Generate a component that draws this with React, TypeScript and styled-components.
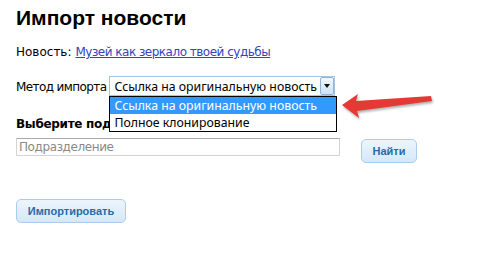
import React from 'react';
import styled, { createGlobalStyle } from 'styled-components';

const GlobalStyle = createGlobalStyle`
  html, body {
    margin: 0;
    padding: 0;
    background: #fff;
  }
  body {
    font-family: 'DejaVu Sans', Verdana, sans-serif;
    font-size: 12px;
    color: #000;
  }
`;

const Page = styled.div`
  position: relative;
  padding: 5px 16px 0;
  width: 478px;
  height: 265px;
  box-sizing: border-box;
  overflow: hidden;
`;

const Title = styled.h1`
  margin: 0;
  font-family: 'Liberation Sans', Arial, sans-serif;
  font-size: 21px;
  font-weight: bold;
  line-height: 25px;
`;

const Line = styled.div`
  margin-top: 15px;
  line-height: 14px;
`;

const NewsLink = styled.a`
  color: #3344bb;
  text-decoration: underline;
  margin-left: 4px;
  letter-spacing: -0.5px;
`;

const MethodRow = styled.div`
  display: flex;
  align-items: flex-start;
  margin-top: 18px;
`;

const Label = styled.span`
  line-height: 14px;
  margin-top: 3px;
  margin-right: 3px;
  letter-spacing: -0.6px;
`;

const SelectWrap = styled.div`
  position: relative;
  width: 226px;
`;

const SelectBox = styled.div`
  display: flex;
  align-items: center;
  height: 20px;
  margin-top: -1px;
  border: 1px solid #a6c3e0;
  box-sizing: border-box;
  padding-left: 4px;
  font-family: 'Noto Sans', 'Open Sans', sans-serif;
  font-size: 12.3px;
  background: #fff;
`;

const SelectText = styled.span`
  flex: 1;
  white-space: nowrap;
  overflow: hidden;
`;

const SelectButton = styled.span`
  width: 14px;
  height: 18px;
  box-sizing: border-box;
  border: 1px solid #8fb3d9;
  border-radius: 2px;
  background: linear-gradient(#f2f8fd, #cfe3f5);
  display: flex;
  align-items: center;
  justify-content: center;

  &::after {
    content: '';
    border-left: 3.5px solid transparent;
    border-right: 3.5px solid transparent;
    border-top: 4px solid #111;
  }
`;

const OptionList = styled.div`
  position: absolute;
  top: 19px;
  left: 0;
  width: 228px;
  border: 1px solid #000;
  box-sizing: border-box;
  background: #fff;
  font-family: 'Noto Sans', 'Open Sans', sans-serif;
  font-size: 12.3px;
  z-index: 2;
`;

const Option = styled.div<{ $active?: boolean }>`
  height: 17px;
  line-height: 17px;
  padding-left: 4px;
  white-space: nowrap;
  background: ${(p) => (p.$active ? '#3399ff' : '#fff')};
  color: ${(p) => (p.$active ? '#fff' : '#000')};
`;

const SectionTitle = styled.div`
  margin-top: 21px;
  font-weight: bold;
  line-height: 14px;
  white-space: nowrap;
  letter-spacing: -0.3px;
`;

const SearchRow = styled.div`
  display: flex;
  align-items: flex-start;
  gap: 21px;
  margin-top: 7px;
`;

const Input = styled.input`
  width: 324px;
  height: 18px;
  box-sizing: border-box;
  margin: 0;
  padding: 0 2px;
  border: 1px solid #d4d4d4;
  border-top-color: #a9a9a9;
  font-family: 'DejaVu Sans', Verdana, sans-serif;
  font-size: 12px;
  letter-spacing: -0.4px;
  outline: none;

  &::placeholder {
    color: #8a8a8a;
  }
`;

const Button = styled.button<{ $width: number }>`
  width: ${(p) => p.$width}px;
  height: 24px;
  margin: 1px 0 0;
  padding: 0;
  border: 1px solid #a9cdea;
  border-radius: 5px;
  background: linear-gradient(#ecf5fd, #d5e8f8);
  color: #2b6aa6;
  font-family: 'Liberation Sans', Arial, sans-serif;
  font-size: 11px;
  font-weight: bold;
  cursor: pointer;
`;

const Footer = styled.div`
  margin-top: 35px;
`;

const Arrow = styled.svg`
  position: absolute;
  left: 336px;
  top: 88px;
  filter: drop-shadow(1px 2px 1px rgba(0, 0, 0, 0.3));
`;

function App() {
  return (
    <Page>
      <GlobalStyle />
      <Title>Импорт новости</Title>
      <Line>
        Новость:<NewsLink href="#">Музей как зеркало твоей судьбы </NewsLink>
      </Line>
      <MethodRow>
        <Label>Метод импорта</Label>
        <SelectWrap>
          <SelectBox>
            <SelectText>Ссылка на оригинальную новость</SelectText>
            <SelectButton />
          </SelectBox>
          <OptionList>
            <Option $active>Ссылка на оригинальную новость</Option>
            <Option>Полное клонирование</Option>
          </OptionList>
        </SelectWrap>
      </MethodRow>
      <SectionTitle>Выберите подразделение для импорта</SectionTitle>
      <SearchRow>
        <Input placeholder="Подразделение" />
        <Button $width={56}>Найти</Button>
      </SearchRow>
      <Footer>
        <Button $width={110}>Импортировать</Button>
      </Footer>
      <Arrow width="104" height="36" viewBox="0 0 104 36">
        <polygon
          points="6,17 22,6 20,13 95,8 96,13 21,23 23,30"
          fill="#e53a33"
        />
      </Arrow>
    </Page>
  );
}

export default App;
